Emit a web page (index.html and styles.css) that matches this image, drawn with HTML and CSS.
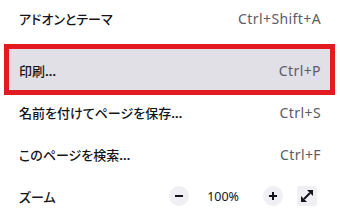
FILE: index.html
```html
<!DOCTYPE html>
<html lang="ja">
<head>
<meta charset="utf-8">
<link rel="stylesheet" href="styles.css">
</head>
<body>
<div class="menu">
  <div class="item first"><span class="label">アドオンとテーマ</span><span class="key">Ctrl+Shift+A</span></div>
  <div class="item active"><span class="label">印刷<span class="dots">…</span></span><span class="key">Ctrl+P</span></div>
  <div class="item"><span class="label">名前を付けてページを保存<span class="dots">…</span></span><span class="key">Ctrl+S</span></div>
  <div class="item"><span class="label">このページを検索<span class="dots">…</span></span><span class="key">Ctrl+F</span></div>
  <div class="item zoom">
    <span class="label">ズーム</span>
    <div class="controls">
      <span class="btn round"><svg width="10" height="10" viewBox="0 0 10 10"><rect x="1" y="4" width="8" height="2" fill="#15141a"/></svg></span>
      <span class="pct">100%</span>
      <span class="btn round"><svg width="10" height="10" viewBox="0 0 10 10"><rect x="1" y="4" width="8" height="2" fill="#15141a"/><rect x="4" y="1" width="2" height="8" fill="#15141a"/></svg></span>
      <span class="btn square"><svg width="14" height="14" viewBox="0 0 14 14"><path d="M4 10 L10 4" stroke="#15141a" stroke-width="2"/><path d="M1 13 L1 7 L7 13 Z" fill="#15141a"/><path d="M13 1 L13 7 L7 1 Z" fill="#15141a"/></svg></span>
    </div>
  </div>
  <div class="highlight"></div>
</div>
</body>
</html>
```

FILE: styles.css
```css
html, body {
  margin: 0;
  padding: 0;
  background: #ffffff;
}
body {
  width: 340px;
  height: 217px;
  overflow: hidden;
  font-family: "Noto Sans", "Noto Sans CJK JP", sans-serif;
  color: #15141a;
}
.menu {
  position: relative;
  margin-top: -3px;
}
.item {
  display: flex;
  align-items: center;
  justify-content: space-between;
  height: 42px;
  margin: 0 9px;
  padding: 0 10px;
}
.item.first {
  margin-bottom: 10px;
}
.item.active {
  background: #e0e0e6;
}
.label {
  font-family: "Noto Sans CJK JP", sans-serif;
  font-size: 13px;
  font-weight: 500;
  font-feature-settings: "palt";
}
.dots {
  font-family: "Noto Sans", sans-serif;
  font-weight: 700;
  letter-spacing: -0.5px;
}
.key {
  font-size: 14px;
  letter-spacing: 0.4px;
  color: #5b5b66;
}
.controls {
  display: flex;
  align-items: center;
  margin-right: 4px;
}
.btn {
  width: 20px;
  height: 20px;
  display: flex;
  align-items: center;
  justify-content: center;
  background: #f0f0f4;
}
.round {
  border-radius: 50%;
}
.square {
  border-radius: 2px;
  margin-left: 14px;
}
.pct {
  font-size: 12.5px;
  margin: 0 24px 0 18px;
}
.highlight {
  position: absolute;
  left: 4px;
  top: 47px;
  width: 321px;
  height: 41px;
  border: 5px solid #e21b23;
}
```
